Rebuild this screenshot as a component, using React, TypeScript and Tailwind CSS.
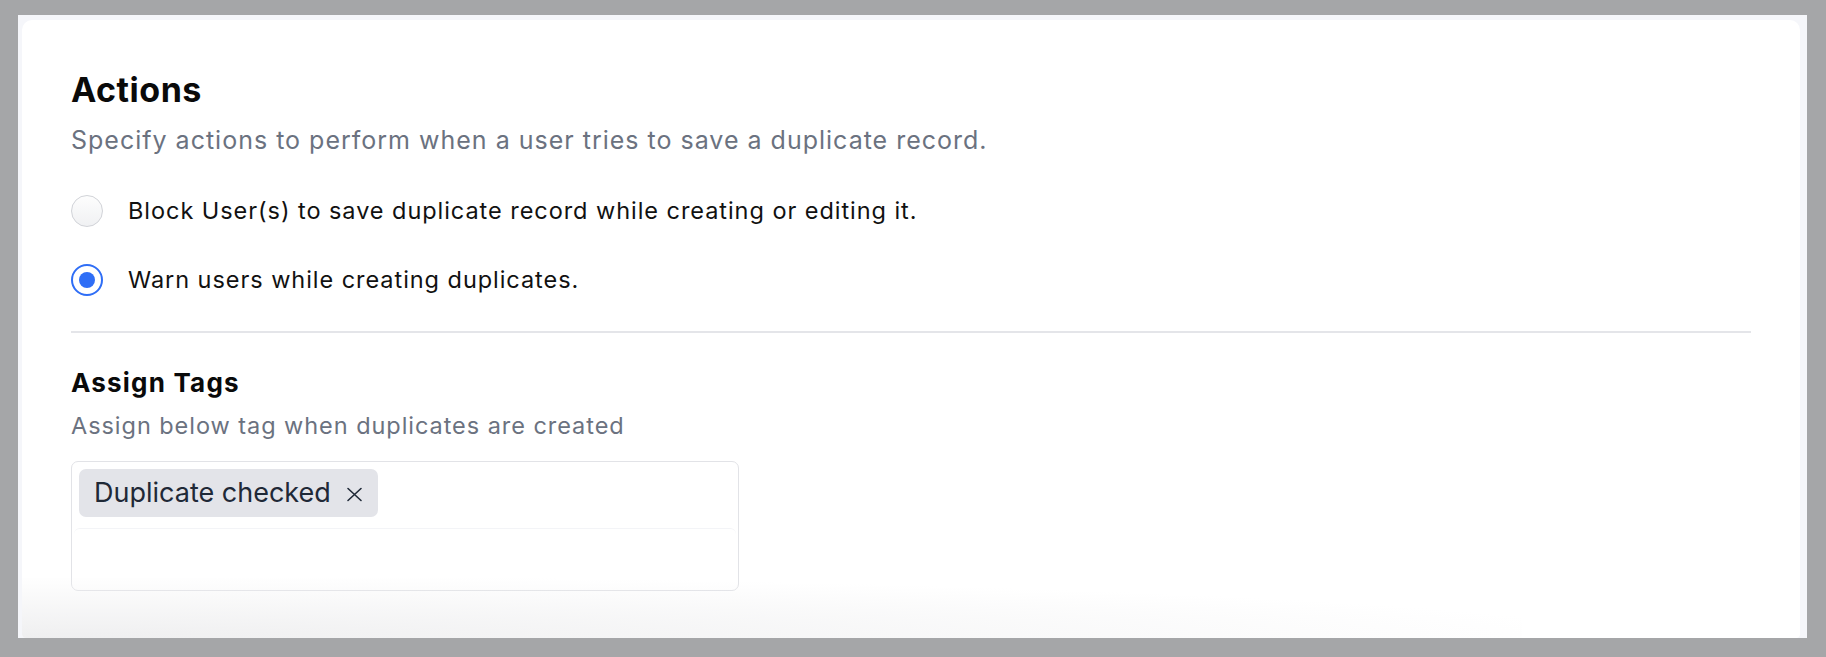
import React from "react";

export default function App() {
  return (
    <div className="w-full h-[657px] bg-[#a5a6a8] pt-[15px] pl-[18px] pr-[19px] pb-[19px]" style={{ fontFamily: "Inter, 'Noto Sans', sans-serif" }}>
      <div className="h-full bg-[#f5f6fa] pt-[5px] pl-[4px] pr-[7px]">
        <div className="relative h-full bg-white rounded-t-[10px] rounded-b-[4px] overflow-hidden px-[49px] pt-[50px]">
          <h1 className="text-[34px] leading-[40px] font-bold text-[#0a0a0a] tracking-[0.5px]">Actions</h1>
          <p className="mt-[14px] text-[25px] leading-[32px] text-[#6b7280] tracking-[1px]">
            Specify actions to perform when a user tries to save a duplicate record.
          </p>

          <div className="mt-[39px] flex flex-col gap-[37px]">
            <label className="flex items-center gap-[25px] h-[32px]">
              <span className="w-[32px] h-[32px] rounded-full border-[1.5px] border-[#d1d3d8] bg-gradient-to-b from-[#fdfdfd] to-[#f0f1f3]" />
              <span className="text-[23.5px] leading-[32px] text-[#111111] tracking-[0.95px]">
                Block User(s) to save duplicate record while creating or editing it.
              </span>
            </label>
            <label className="flex items-center gap-[25px] h-[32px]">
              <span className="w-[32px] h-[32px] rounded-full border-[2.5px] border-[#2f6ef6] bg-white flex items-center justify-center">
                <span className="w-[16px] h-[16px] rounded-full bg-[#2f6ef6]" />
              </span>
              <span className="text-[23.5px] leading-[32px] text-[#111111] tracking-[0.95px]">
                Warn users while creating duplicates.
              </span>
            </label>
          </div>

          <div className="mt-[35px] h-[1.5px] bg-[#e4e5e9]" />

          <h2 className="mt-[34px] text-[26px] leading-[32px] font-bold text-[#0a0a0a] tracking-[1.2px]">Assign Tags</h2>
          <p className="mt-[11px] text-[23.5px] leading-[32px] text-[#6b7280] tracking-[0.95px]">
            Assign below tag when duplicates are created
          </p>

          <div className="mt-[19px] w-[668px] h-[130px] rounded-[7px] border-[1.5px] border-[#e2e3e7] pt-[7.5px] px-[2px] flex flex-col">
            <div className="pl-[5px] flex">
              <span className="inline-flex items-center h-[48px] pl-[15px] pr-[15px] rounded-[7px] bg-[#e3e4e9] text-[27px] text-[#1f2937]">
                Duplicate checked
                <svg className="ml-[15px] mt-[2px]" width="17" height="15" viewBox="0 0 17 15" fill="none">
                  <path d="M2 1.5 L15 13.5 M15 1.5 L2 13.5" stroke="#1f2937" strokeWidth="1.6" strokeLinecap="round" />
                </svg>
              </span>
            </div>
            <div className="mt-[11px] flex-1 rounded-[6px] border-t border-[#f3f4f7]" />
          </div>

          <div className="pointer-events-none absolute left-0 bottom-0 w-[1500px] h-[60px] bg-[radial-gradient(ellipse_at_bottom_left,#efeff0_0%,rgba(255,255,255,0)_75%)]" />
        </div>
      </div>
    </div>
  );
}
